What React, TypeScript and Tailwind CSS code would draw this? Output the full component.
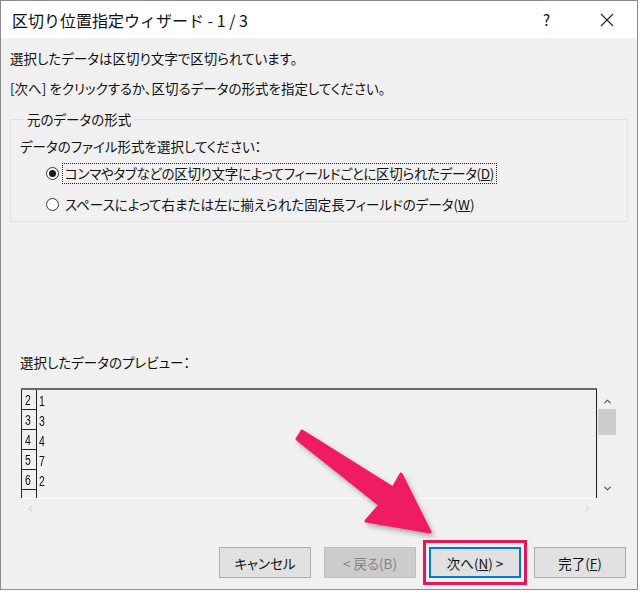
import { ChevronUp, ChevronDown, ChevronLeft, ChevronRight } from "lucide-react";

const ROWS = [
  { n: "2", v: "1" },
  { n: "3", v: "3" },
  { n: "4", v: "4" },
  { n: "5", v: "7" },
  { n: "6", v: "2" },
];

function Radio({ checked }: { checked?: boolean }) {
  return (
    <span className="flex h-[13px] w-[13px] items-center justify-center rounded-full border border-[#333] bg-white">
      {checked && <span className="h-[7px] w-[7px] rounded-full bg-[#1a1a1a]" />}
    </span>
  );
}

function Button({ children, disabled, focused }: { children: React.ReactNode; disabled?: boolean; focused?: boolean }) {
  return (
    <div
      className={
        "flex h-[31px] w-[92px] items-center justify-center text-[13.5px] " +
        (disabled
          ? "border border-[#bfbfbf] bg-[#cccccc] text-[#838383]"
          : focused
          ? "border-2 border-[#0078d7] bg-[#e1e1e1] text-[#111]"
          : "border border-[#adadad] bg-[#e1e1e1] text-[#111]")
      }
    >
      {children}
    </div>
  );
}

export default function App() {
  return (
    <div className="relative h-[592px] w-[640px] overflow-hidden bg-white font-['Noto_Sans_CJK_JP',sans-serif] text-[#111] [font-feature-settings:'palt']">
      <div className="flex h-[590px] w-[638px] flex-col border border-[#8c8c8c]">
        {/* title bar */}
        <div className="flex h-[37px] items-center bg-white">
          <span className="ml-[11px] text-[16px] leading-none [font-feature-settings:normal]">区切り位置指定ウィザード - 1 / 3</span>
          <span className="ml-auto mr-[50px] text-[15px] leading-none">?</span>
          <svg width="14" height="14" viewBox="0 0 14 14" className="mr-[23px]">
            <path d="M1 1 L13 13 M13 1 L1 13" stroke="#222" strokeWidth="1.1" />
          </svg>
        </div>

        {/* body */}
        <div className="flex flex-1 flex-col bg-[#f0f0f0] pb-[11px] text-[13.5px] leading-[20px]">
          <p className="ml-[9px] mt-[10px]">選択したデータは区切り文字で区切られています。</p>
          <p className="ml-[9px] mt-[10px]">[次へ] をクリックするか、区切るデータの形式を指定してください。</p>

          <fieldset className="mx-[9px] mt-[11px] border border-[#e0e0e0] pb-[7px] pl-[9px] pr-[9px]">
            <legend className="ml-[4px] px-[3px]">元のデータの形式</legend>
            <p className="mt-[7px]">データのファイル形式を選択してください：</p>
            <div className="ml-[26px] mt-[7px] flex items-center">
              <Radio checked />
              <span className="ml-[3px] border border-dotted border-[#222] px-[2px] leading-[19px] tracking-[-0.3px]">
                コンマやタブなどの区切り文字によってフィールドごとに区切られたデータ(<span className="underline">D</span>)
              </span>
            </div>
            <div className="ml-[26px] mt-[10px] flex items-center">
              <Radio />
              <span className="ml-[6px]">
                スペースによって右または左に揃えられた固定長フィールドのデータ(<span className="underline">W</span>)
              </span>
            </div>
          </fieldset>

          <div className="flex-1" />

          <p className="ml-[19px]">選択したデータのプレビュー：</p>

          {/* preview */}
          <div className="ml-[20px] mt-[16px] grid w-[596px] grid-cols-[576px_20px] grid-rows-[110px_20px]">
            <div className="flex border-t-2 border-r border-t-[#6a6a6a] border-r-[#222] overflow-hidden">
              <div className="flex w-[16px] flex-col border-x border-[#222]">
                {ROWS.map((r) => (
                  <div key={r.n} className="flex h-[20px] items-end border-b border-[#222] pl-[3px] font-['Liberation_Sans',sans-serif] text-[14px] leading-[18px]">
                    <span className="inline-block origin-left scale-x-75">{r.n}</span>
                  </div>
                ))}
                <div className="flex-1" />
              </div>
              <div className="flex flex-col pl-[2px] font-['Liberation_Sans',sans-serif] text-[14px]">
                {ROWS.map((r) => (
                  <div key={r.n} className="flex h-[20px] items-end leading-[18px]">
                    <span className="inline-block origin-left scale-x-75">{r.v}</span>
                  </div>
                ))}
              </div>
            </div>
            <div className="flex flex-col items-center pt-[8px]">
              <ChevronUp size={11} strokeWidth={2.5} color="#555" />
              <div className="mt-[2px] h-[26px] w-[18px] bg-[#cdcdcd]" />
              <div className="flex-1" />
              <ChevronDown size={11} strokeWidth={2.5} color="#555" className="mb-[4px]" />
            </div>
            <div className="flex items-center justify-between border-t border-white px-[4px]">
              <ChevronLeft size={11} strokeWidth={2} color="#c2c2c2" />
              <ChevronRight size={11} strokeWidth={2} color="#c2c2c2" />
            </div>
            <div />
          </div>

          {/* buttons */}
          <div className="ml-[218px] mt-[29px] flex gap-[13px]">
            <Button>キャンセル</Button>
            <Button disabled>&lt; 戻る(B)</Button>
            <div className="relative">
              <Button focused>
                次へ(<span className="underline">N</span>) &gt;
              </Button>
              <div className="absolute -inset-x-[6px] -inset-y-[7px] border-[3px] border-[#e3175c]" />
            </div>
            <Button>
              完了(<span className="underline">F</span>)
            </Button>
          </div>
        </div>
      </div>

      {/* annotation arrow */}
      <svg className="pointer-events-none absolute left-0 top-0" width="640" height="592" viewBox="0 0 640 592">
        <defs>
          <filter id="sh" x="-20%" y="-20%" width="140%" height="140%">
            <feDropShadow dx="2" dy="3" stdDeviation="2.5" floodColor="#000" floodOpacity="0.3" />
          </filter>
        </defs>
        <polygon
          points="297,439 302,431 393,488 401,474 430,532 366,521 380,505"
          fill="#ef1a63"
          stroke="#ef1a63"
          strokeWidth="3"
          strokeLinejoin="round"
          filter="url(#sh)"
        />
      </svg>
    </div>
  );
}
